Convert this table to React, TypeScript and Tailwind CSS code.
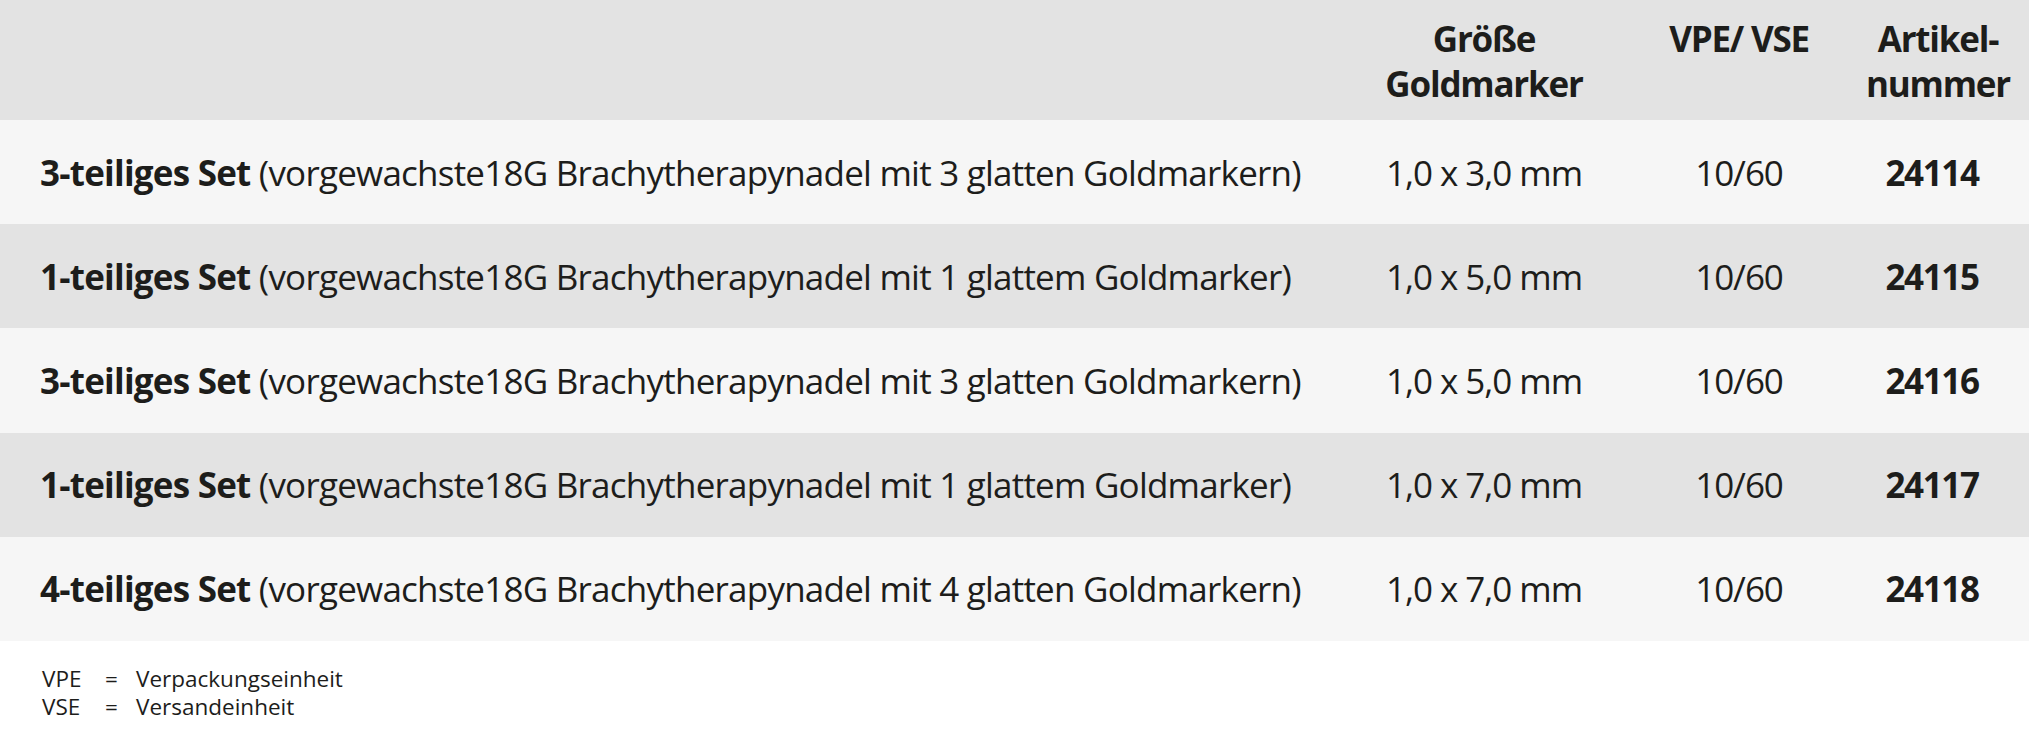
const rows = [
  { set: "3-teiliges Set", desc: "(vorgewachste18G Brachytherapynadel mit 3 glatten Goldmarkern)", size: "1,0 x 3,0 mm", vpe: "10/60", art: "24114" },
  { set: "1-teiliges Set", desc: "(vorgewachste18G Brachytherapynadel mit 1 glattem Goldmarker)", size: "1,0 x 5,0 mm", vpe: "10/60", art: "24115" },
  { set: "3-teiliges Set", desc: "(vorgewachste18G Brachytherapynadel mit 3 glatten Goldmarkern)", size: "1,0 x 5,0 mm", vpe: "10/60", art: "24116" },
  { set: "1-teiliges Set", desc: "(vorgewachste18G Brachytherapynadel mit 1 glattem Goldmarker)", size: "1,0 x 7,0 mm", vpe: "10/60", art: "24117" },
  { set: "4-teiliges Set", desc: "(vorgewachste18G Brachytherapynadel mit 4 glatten Goldmarkern)", size: "1,0 x 7,0 mm", vpe: "10/60", art: "24118" },
];

export default function App() {
  return (
    <div
      className="w-[2029px] h-[729px] bg-white text-[#1d1d1b] overflow-hidden"
      style={{ fontFamily: '"Open Sans", "Noto Sans", sans-serif' }}
    >
      {/* Header */}
      <div className="flex h-[120px] bg-[#e3e3e3] pt-[16px] text-[35px] leading-[45px] font-bold tracking-[-0.035em]">
        <div className="w-[1384px]" />
        <div className="w-[200px] text-center">
          Größe
          <br />
          Goldmarker
        </div>
        <div className="ml-[70px] w-[170px] text-center">VPE/ VSE</div>
        <div className="ml-[34px] w-[160px] text-center">
          Artikel-
          <br />
          nummer
        </div>
      </div>

      {/* Body rows */}
      {rows.map((r, i) => (
        <div
          key={r.art}
          className={`flex items-center h-[104.2px] text-[35px] leading-[45px] ${
            i % 2 === 0 ? "bg-[#f6f6f6]" : "bg-[#e3e3e3]"
          }`}
        >
          <div className="w-[1384px] pl-[40px] whitespace-nowrap tracking-[-0.022em]">
            <span className="font-bold">{r.set}</span> {r.desc}
          </div>
          <div className="w-[200px] text-center whitespace-nowrap tracking-[-0.03em]">{r.size}</div>
          <div className="ml-[70px] w-[170px] text-center tracking-[-0.03em]">{r.vpe}</div>
          <div className="ml-[34px] w-[148px] text-center font-bold tracking-[-0.04em]">{r.art}</div>
        </div>
      ))}

      {/* Legend */}
      <div className="pt-[24px] pl-[42px] text-[22.5px] leading-[28px]">
        <div className="flex">
          <span className="w-[63px]">VPE</span>
          <span className="w-[31px]">=</span>
          <span>Verpackungseinheit</span>
        </div>
        <div className="flex">
          <span className="w-[63px]">VSE</span>
          <span className="w-[31px]">=</span>
          <span>Versandeinheit</span>
        </div>
      </div>
    </div>
  );
}
